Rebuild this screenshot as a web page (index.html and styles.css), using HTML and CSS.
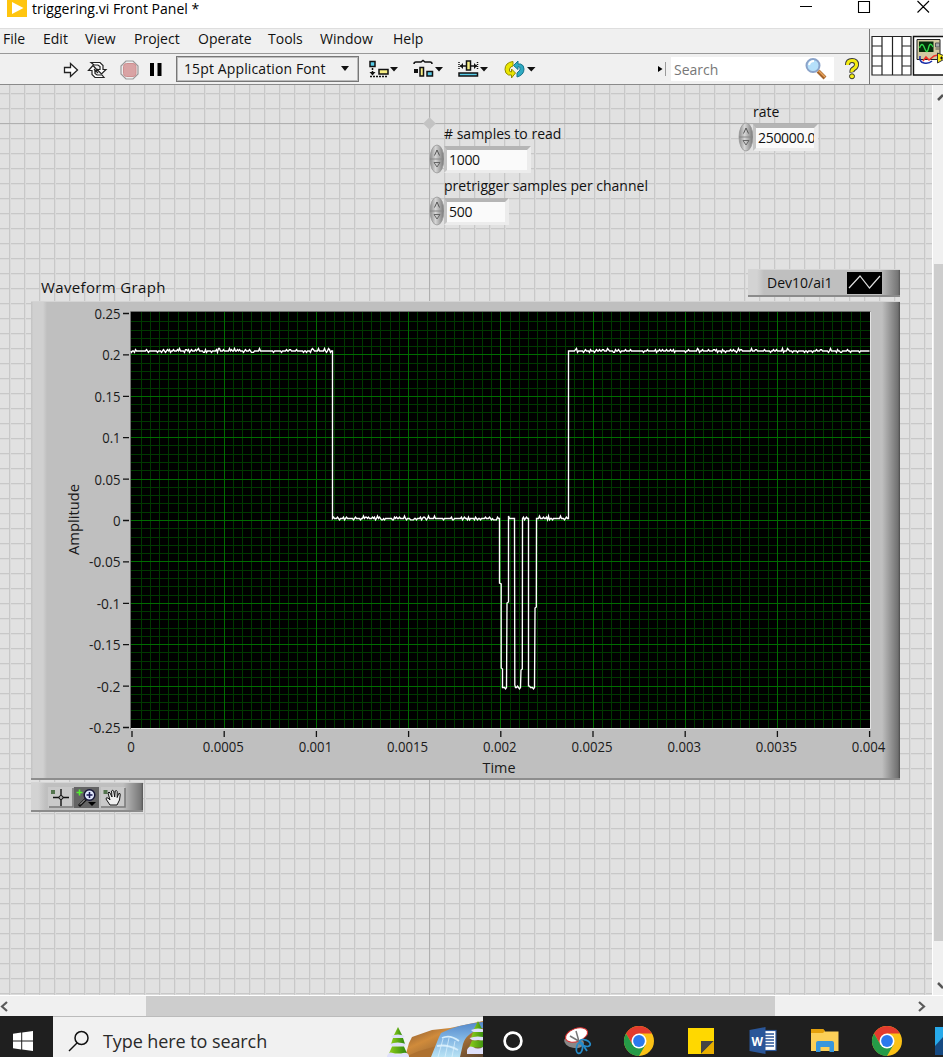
FILE: index.html
```html
<!DOCTYPE html>
<html lang="en">
<head>
<meta charset="utf-8">
<title>triggering.vi Front Panel *</title>
<link rel="stylesheet" href="styles.css">
</head>
<body>
<div class="window">
  <header class="titlebar">
    <svg class="app-icon" width="20" height="17" viewBox="0 0 20 17"><rect width="20" height="17" fill="#ffc50f"/><path d="M5 2v12L16.500 8z" fill="#fff"/></svg>
    <span class="title">triggering.vi Front Panel *</span>
    <svg class="controls" width="130" height="28" viewBox="0 0 130 28" fill="none" stroke="#000" stroke-width="1.1"><path d="M0 6.500h12M58.500 1.500h11v11h-11zM117.500 1l11.500 11.500M129 1l-11.500 11.500"/></svg>
  </header>

  <div class="bars">
    <div class="bars-main">
      <nav class="menubar"><span>File</span><span>Edit</span><span>View</span><span>Project</span><span>Operate</span><span>Tools</span><span>Window</span><span>Help</span></nav>
      <div class="toolbar">
        <svg class="run-tools" width="104" height="30" viewBox="62 54 104 30">
          <path d="M64.500 67.500h6v-4l7 6.500-7 6.500v-4h-6z" fill="#fff" stroke="#222" stroke-width="1.300"/>
          <g fill="#fff" stroke="#222" stroke-width="1.200"><path d="M91 62.500h9l3 3v4h3l-4.500 4.500-4.500-4.500h3v-3l-2-1.500h-4z"/><path d="M104 77.500h-9l-3-3v-4h-3.500l4.500-5 4.500 5H95v3l2 1.500h5z"/><path d="M94 69l4 4m0-4l-3 3" fill="none"/></g>
          <path d="M126 61h7l5 5v8l-5 5h-7l-5-5v-8z" fill="#eee" stroke="#999" stroke-width="1.200"/>
          <rect x="123.500" y="63.500" width="12.500" height="13" rx="3" fill="#d9a3a4" stroke="#cf8f90"/>
          <path d="M150 63h4v13h-4zM157.500 63h4v13h-4z" fill="#000"/>
        </svg>
        <div class="font-select"><span>15pt Application Font</span><i class="caret"></i></div>
        <svg class="layout-tools" width="172" height="30" viewBox="366 54 172 30">
          <g stroke="#111" stroke-width="1.500">
            <path d="M371 61.500h5v5h-5z" fill="#58cce8"/><path d="M380 69.500h9v4.500h-9z" fill="#f7ee83"/>
            <path d="M373.500 68v5M371 76.500h18" stroke-dasharray="2 1"/>
            <path d="M415 64q0-2 2-2h5l2-1.500 2 1.500h5q2 0 2 2" fill="none"/>
            <path d="M421 67.500h3.500v8.500H421z" fill="#f7ee83"/><path d="M428 71.500h5.500v4.500H428z" fill="#58cce8"/>
            <path d="M467.500 61h4v9h-4z" fill="#f7ee83"/><path d="M460 73h18.500v3H460z" fill="#58cce8"/>
            <path d="M460 62v8M478.500 62v8" stroke-dasharray="1 1"/><path d="M461 66h6M472 66h6"/>
          </g>
          <g fill="#111"><path d="M370.500 72h6l-3 3.500zM415 69h4v4h-4zM461 66l3-3v6zM478 66l-3-3v6z"/>
            <path d="M391 67h8l-4 4.500zM436 67h8l-4 4.500zM481 67h8l-4 4.500zM528 67h8.500l-4.200 4.500z"/></g>
          <path d="M514 61.500q-8 1-8 8 0 4 3.500 5.500h3v3l4-5-4-4v3q-3 0-2-3 .8-2.700 3.500-3z" fill="#eae600" stroke="#928c00"/>
          <path d="M518 77q7-2 7-8 0-4-3.500-5H519v-3l-4.500 4.500 4.500 4v-3q3 0 2 3.500l-3 3z" fill="#2faac2" stroke="#16758c"/>
        </svg>
        <div class="search-wrap">
          <svg width="10" height="16" viewBox="0 0 10 16"><path d="M1 5l4.500 3L1 11z"/><path d="M8.500 1v14" stroke="#999"/></svg>
          <div class="search-box"><span>Search</span>
            <svg width="24" height="24" viewBox="0 0 24 24"><path d="M14 14l7 7" stroke="#a5642b" stroke-width="4"/><path d="M14 13l7 7" stroke="#e9a55c" stroke-width="1.500"/><circle cx="9" cy="8.500" r="6.500" fill="#b5e0fa" stroke="#8aa3c9" stroke-width="2"/><path d="M5 8q1-4 5-4" fill="none" stroke="#fff" stroke-width="2"/></svg>
          </div>
          <svg class="help" width="16" height="22" viewBox="0 0 16 22"><g fill="none" stroke-linejoin="round"><path d="M3.500 7q0-4.500 4.500-4.500t4.500 4q0 2.500-2.500 4t-2 4" stroke="#333" stroke-width="5"/><path d="M3.500 7q0-4.500 4.500-4.500t4.500 4q0 2.500-2.500 4t-2 3.500" stroke="#f4ec13" stroke-width="3.200"/></g><circle cx="8" cy="18.300" r="2.500" fill="#f4ec13" stroke="#333"/></svg>
        </div>
      </div>
    </div>
    <svg class="vi-icons" width="73" height="55" viewBox="870 29 73 55">
      <path d="M872 36.500h39v38.500h-39zM882 36v39M892.500 36v39M902 36v39M872 56h39M872 46h10M872 66h10M902 46h9M902 66h9" fill="#fff" stroke="#222" stroke-width="1.200"/>
      <path d="M913.500 36.500H944v38.500h-30.500z" fill="#fff" stroke="#111" stroke-width="1.400"/>
      <path d="M917 39.500h23v20h-23z" fill="#d3caa2" stroke="#222"/>
      <path d="M919 41.500h14.500v10.500H919z" fill="#052c0a"/><path d="M919.500 48q2.500-7 5 0t4 0 4.500-1" fill="none" stroke="#32d94a" stroke-width="1.300"/>
      <path d="M935.500 43h4v4h-4zM935.500 49h4" fill="#aaa" stroke="#555"/>
      <path d="M917 60h24v5h-24z" fill="#fff"/>
      <path d="M920 56q-1 6 4 7 5 1 8-2" fill="none" stroke="#1b2faa" stroke-width="1.500"/><path d="M923 61l3-4 3 3 5-4 4-1" fill="none" stroke="#f03028" stroke-width="1.500"/>
      <path d="M937.500 53v10l7-4v-3z" fill="#f6ea10" stroke="#333"/><path d="M940 58h3m-1.500-1.500v3" stroke="#111"/>
    </svg>
  </div>

  <div class="workspace">
    <main class="canvas">
      <i class="origin-x"></i><i class="origin-y"></i><i class="origin-mark"></i>

      <section class="numeric samples">
        <label>#&nbsp;samples to read</label>
        <div class="field"><svg class="spin" width="16" height="30" viewBox="0 0 16 30"><use href="#spinner"/></svg><output>1000</output></div>
      </section>
      <section class="numeric pretrigger">
        <label>pretrigger samples per channel</label>
        <div class="field"><svg class="spin" width="16" height="30" viewBox="0 0 16 30"><use href="#spinner"/></svg><output>500</output></div>
      </section>
      <section class="numeric rate">
        <label>rate</label>
        <div class="field"><svg class="spin" width="16" height="30" viewBox="0 0 16 30"><use href="#spinner"/></svg><output>250000.0</output></div>
      </section>

      <div class="graph-label">Waveform Graph</div>
      <div class="legend"><span>Dev10/ai1</span>
        <svg width="35" height="22" viewBox="0 0 35 22"><rect width="35" height="22"/><path d="M2 16L13 4l9.500 12L33 4" fill="none" stroke="#ddd" stroke-width="1.200"/></svg>
      </div>

      <div class="graph">
        <svg id="plot" width="869" height="476" viewBox="31 302 869 476">
          <rect x="130" y="311" width="741" height="418" fill="#e4e4e4"/>
          <path d="M130.500 729V311.500h740" fill="none" stroke="#707070"/>
          <rect x="131" y="312" width="739" height="416"/>
          <path id="minor" stroke="#003800" shape-rendering="crispEdges"/>
          <path id="major" stroke="#006c00" shape-rendering="crispEdges"/>
          <path id="ticks" stroke="#111" stroke-width="1.300"/>
          <path id="wave" fill="none" stroke="#fff" stroke-width="1.350"/>
          <g id="labels" class="axis"></g>
          <text class="axis" x="499" y="773" text-anchor="middle" textLength="33" lengthAdjust="spacingAndGlyphs">Time</text>
          <text class="axis" transform="translate(79 519.500) rotate(-90)" text-anchor="middle" textLength="71" lengthAdjust="spacingAndGlyphs">Amplitude</text>
        </svg>
      </div>

      <div class="palette">
        <svg width="26" height="22" viewBox="48 787 26 22"><rect x="48" y="787" width="25" height="21" fill="#c9c9c9"/><path d="M49 807h24v-19" fill="none" stroke="#777" stroke-width="1.500"/><rect x="51" y="790" width="4" height="4" fill="#54744e"/><path d="M61 789v17M53 797.500h16" stroke="#111" stroke-width="1.400"/><circle cx="61" cy="797.500" r="2" fill="#aaa" stroke="#111"/></svg>
        <svg width="26" height="22" viewBox="74 787 26 22"><rect x="74" y="787" width="25" height="21" fill="#646464"/><path d="M79.500 789.500v6M76.500 792.500h6" stroke="#55ee31" stroke-width="1.600"/><path d="M79 806l7-7" stroke="#111" stroke-width="3"/><path d="M80 804.500l5-5" stroke="#ccc"/><circle cx="89.500" cy="795" r="5.300" fill="#dfe6fb" stroke="#151535" stroke-width="1.500"/><path d="M86.500 795h6m-3-3v6" stroke="#17174f" stroke-width="1.500"/><path d="M88 802h8l-4 4z"/></svg>
        <svg width="26" height="22" viewBox="100 787 26 22"><rect x="101" y="787" width="24" height="21" fill="#c9c9c9"/><path d="M101 807h24v-19" fill="none" stroke="#777" stroke-width="1.500"/><rect x="103.500" y="790" width="4" height="4" fill="#54744e"/><path transform="translate(1 0)" d="M109 805l-4-6q0-2 2-1l2 2-2-7q1-2 2 0l2 4-.5-6q1.500-1.500 2.200 0l1 6 .5-6q1.500-1.200 2 .5v6l1.500-4q2-.5 1.500 1.500l-.7 5-2.500 5z" fill="#eee" stroke="#111"/></svg>
      </div>
    </main>
    <div class="vscroll"><i class="vthumb"></i>
      <svg class="up" width="10" height="12" viewBox="0 0 10 12"><path d="M5 9l5-5" stroke="#555" stroke-width="2.500"/></svg>
      <svg class="down" width="10" height="12" viewBox="0 0 10 12"><path d="M5 2l5 5" stroke="#555" stroke-width="2.500"/></svg>
    </div>
  </div>

  <div class="hscroll">
    <svg width="10" height="20" viewBox="0 0 10 20"><path d="M7 6l-5 4.500L7 15" fill="none" stroke="#5a5a5a" stroke-width="2.200"/></svg>
    <i class="hthumb"></i>
    <svg class="right" width="10" height="20" viewBox="0 0 10 20"><path d="M2 6l5 4.500L2 15" fill="none" stroke="#5a5a5a" stroke-width="2.200"/></svg>
  </div>

  <footer class="taskbar">
    <div class="start"><svg width="20" height="20" viewBox="0 0 20 20" fill="#fff"><path d="M0 2.800L8.200 1.600V9.500H0zM9.200 1.500L20 0v9.500H9.200zM0 10.500h8.200v7.900L0 17.200zM9.200 10.500H20V20L9.200 18.500z"/></svg></div>
    <div class="task-search">
      <svg width="22" height="22" viewBox="0 0 22 22" fill="none" stroke="#111" stroke-width="1.500"><circle cx="13.500" cy="8" r="6.500"/><path d="M9 13l-8 8"/></svg>
      <span>Type here to search</span>
      <svg class="scene" width="98" height="40" viewBox="385 1017 98 40">
        <defs>
          <linearGradient id="rock" x1="0" x2="1" y2="1"><stop offset="0" stop-color="#6a452d"/><stop offset=".4" stop-color="#d08b3b"/><stop offset="1" stop-color="#5c432f"/></linearGradient>
          <linearGradient id="river" x1="0" x2="0" y2="1"><stop offset="0" stop-color="#5287ca"/><stop offset=".45" stop-color="#7fb3e2"/><stop offset="1" stop-color="#b9e3f4"/></linearGradient>
          <linearGradient id="pine" x1="0" x2="1"><stop offset="0" stop-color="#8fce1c"/><stop offset="1" stop-color="#2c860e"/></linearGradient>
          <g id="tree"><path d="M0 0l5 10H-5z" fill="url(#pine)"/><path d="M-7 9q7-3 14 0-2 3-7 2-5 1-7-2z" fill="#dfe0fa"/><path d="M-5 11H5l2 6H-7z" fill="url(#pine)"/><path d="M-8.500 17q8-3 17 0-3 4-8.500 2-5 2-8.500-2z" fill="#dfe0fa"/><path d="M-6 19.500H6l3 7H-9z" fill="url(#pine)"/><path d="M-11 29q2-5 6-3 5 3 10 0 5-1 6 3v4h-22z" fill="#dfe0fa"/></g>
        </defs>
        <path d="M405 1057l4-14 3-6 20-7 18-2 33-7v36z" fill="url(#rock)"/>
        <path d="M405 1057l14-6 18-5 4 11z" fill="#ae7130"/>
        <path d="M441 1033q18-9 42-11v6q-17 5-20 16l-3 13h-29l8-20z" fill="url(#river)"/>
        <path d="M442 1038q8-4 17 3M437 1046q10-2 21 4" fill="none" stroke="#d5edfb" stroke-width="1.800"/>
        <path d="M443 1039l-5 18M449 1038l-4 19M455 1041l-3 16" stroke="#dff4ff" opacity=".7"/>
        <use href="#tree" x="398" y="1027"/><use href="#tree" x="478" y="1021"/>
      </svg>
    </div>
    <div class="apps">
      <svg width="460" height="41" viewBox="483 1016 460 41">
        <circle cx="513" cy="1041" r="8.400" fill="none" stroke="#fff" stroke-width="2.700"/>
        <g><ellipse cx="574" cy="1042" rx="10" ry="6" fill="#888" transform="rotate(12 574 1042)"/><ellipse cx="576.500" cy="1035" rx="11.500" ry="6.500" fill="#fff" stroke="#d63131" transform="rotate(-20 576.500 1035)"/><path d="M576 1031l4 14M570 1036l12 7" stroke="#777" stroke-width="1.500"/><g fill="none" stroke="#258bc9" stroke-width="1.800"><ellipse cx="585" cy="1043" rx="5.500" ry="3" transform="rotate(20 585 1043)"/><ellipse cx="579.500" cy="1048" rx="3" ry="5.500" transform="rotate(10 579.500 1048)"/><path d="M581 1042l6 9"/></g></g>
        <defs><g id="chrome"><circle r="15" fill="#fbc116"/><path d="M-13-7.500A15 15 0 0 1 13-7.500H0L-6.500 3.700z" fill="#e33b2e"/><path d="M-13-7.500A15 15 0 0 0 0 15L6.500 3.700-6.500 3.700z" fill="#259b48"/><circle r="7.500" fill="#fff"/><circle r="5.900" fill="#2b79ed"/></g></defs>
        <use href="#chrome" x="639" y="1041"/><use href="#chrome" x="887" y="1041"/>
        <rect x="688" y="1028" width="26" height="26" fill="#ffd800"/><path d="M701 1054v-13h13z" fill="#444"/><path d="M701 1054l13-13v13z" fill="#e9af00"/>
        <rect x="759" y="1030.500" width="17" height="20" fill="#fff" stroke="#2a5699" stroke-width="1.200"/><path d="M765 1034h9M765 1037h9M765 1040h9M765 1043h9M765 1046h9" stroke="#2a5699" stroke-width="1.300"/><path d="M749.500 1030l16-3v27l-16-3z" fill="#2a5699"/><text class="word" x="751.500" y="1046" textLength="11.500" lengthAdjust="spacingAndGlyphs">W</text>
        <path d="M811 1029h12l2 2.500h13.500V1051H811z" fill="#fbcf58"/><path d="M811 1029h12l2 2-2 2h-12z" fill="#e4a00c"/><path d="M816 1052v-9q0-2 2-2h14q2 0 2 2v9h-4.500v-5h-9v5z" fill="#3796dd"/>
        <rect x="935" y="1027" width="8" height="28" fill="#164a82"/><path d="M935 1027h8v10l-8 9z" fill="#27a9ea"/>
      </svg>
    </div>
  </footer>
</div>

<svg width="0" height="0" class="defs"><defs>
  <linearGradient id="metal"><stop offset="0" stop-color="#8d8d8d"/><stop offset=".4" stop-color="#d6d6d6"/><stop offset="1" stop-color="#777"/></linearGradient>
  <g id="spinner"><ellipse cx="8" cy="15" rx="7" ry="14" fill="url(#metal)" stroke="#999" stroke-width=".8"/><path d="M1 15h14" stroke="#888"/><path d="M5.500 11.500L8 6l2.500 5.500" fill="none" stroke="#555"/><path d="M5 18.500h6L8 23z" fill="none" stroke="#666"/></g>
</defs></svg>
<script src="plot.js"></script>
</body>
</html>
```

FILE: styles.css
```css
* { box-sizing: border-box; }
body { margin: 0; font-family: "Open Sans", "Noto Sans", sans-serif; font-size: 14px; color: #111; overflow: hidden; }
svg { display: block; flex: none; }
.defs { position: absolute; }
.window { width: 943px; height: 1057px; display: flex; flex-direction: column; overflow: hidden; }
.titlebar { height: 28px; background: #fff; display: flex; align-items: flex-start; padding-left: 7px; flex: none; }
.title { margin-left: 5px; line-height: 17px; font-size: 14px; letter-spacing: 0.02px; color: #000; white-space: nowrap; }
.controls { margin-left: auto; margin-right: 13px; }
.bars { height: 57px; display: flex; background: #f0f0f0; border-top: 1px solid #dedede; border-bottom: 1px solid #8a8a8a; flex: none; }
.bars-main { width: 870px; border-right: 1px solid #777; }
.menubar { height: 25px; display: grid; grid-template-columns: 40px 42px 49px 64px 70px 52px 73px 60px; padding-left: 3px; line-height: 20px; border-bottom: 1px solid #999; }
.toolbar { height: 30px; display: flex; align-items: center; padding-left: 62px; }
.font-select { width: 183px; height: 26px; margin-left: 10px; border: 1px solid #777; box-shadow: inset 0 0 0 1px #bbb; display: flex; align-items: center; justify-content: space-between; padding: 0 9px 2px 7px; white-space: nowrap; letter-spacing: 0.12px; }
.caret { border: 4.5px solid transparent; border-top: 5px solid #111; border-bottom: 0; }
.layout-tools { margin-left: 6px; }
.search-wrap { display: flex; align-items: center; margin-left: 120px; }
.search-box { width: 163px; height: 24px; margin-left: 4px; background: #fff; color: #777; display: flex; align-items: center; justify-content: space-between; padding: 0 6px 0 3px; }
.help { margin-left: 10px; }
.workspace { height: 910px; display: flex; flex: none; }
.canvas { width: 933px; position: relative; background-color: #e1e1e1; background-image: linear-gradient(90deg, #c8c8c8 1px, #dadada 1px 2px, transparent 2px), linear-gradient(#c8c8c8 1px, #dadada 1px 2px, transparent 2px); background-size: 15px 15px; background-position: 9px 8px; border-right: 1px solid #fff; }
.canvas > * { position: absolute; }
.origin-x { left: 0; top: 38px; width: 932px; height: 1px; background: #b0b0b0; }
.origin-y { left: 429px; top: 0; width: 1px; height: 910px; background: #b0b0b0; }
.origin-mark { left: 425px; top: 34px; width: 9px; height: 9px; background: #c3c3c3; transform: rotate(45deg); }
.numeric { display: flex; flex-direction: column; align-items: flex-start; white-space: nowrap; }
.numeric label { padding-left: 15px; line-height: 20px; }
.field { display: flex; align-items: center; height: 30px; }
.field output { height: 27px; margin-left: -1px; padding: 0 0 0 2px; border: solid; border-width: 4px 4px 3px 3px; border-color: #b5b5b5 #ececec #ececec #c4c4c4; background: #fafafa; line-height: 20px; overflow: hidden; letter-spacing: -0.3px; }
.samples { left: 429px; top: 39px; }
.samples output { width: 87px; }
.pretrigger { left: 429px; top: 90px; }
.pretrigger label { line-height: 21px; }
.pretrigger output { width: 65px; }
.rate { left: 738px; top: 17px; }
.rate output { width: 65px; }
.graph-label { left: 41px; top: 192px; line-height: 20px; font-size: 15px; letter-spacing: 0.35px; white-space: nowrap; }
.legend { left: 748px; top: 184px; width: 152px; height: 28px; display: flex; align-items: center; padding: 0 18px 0 19px; justify-content: space-between; background: linear-gradient(90deg, #d3d3d3 0 9px, #bfbfbf 16px 132px, #757575 150px, #555); border-top: 1px solid #d5d5d5; border-bottom: 2px solid #8b8b8b; }
.graph { left: 31px; top: 216px; width: 869px; height: 479px; background: linear-gradient(90deg, #c5c5c5 0 1px, #d0d0d0 2px 12px, #bfbfbf 16px 851px, #707070 867px, #4b4b4b); border-top: 1px solid #d4d4d4; border-bottom: 2px solid #8d8d8d; overflow: hidden; }
.axis { font-size: 15px; fill: #1a1a1a; }
.palette { left: 31px; top: 697px; width: 112px; height: 30px; display: flex; padding: 4px 0 0 17px; background: linear-gradient(90deg, #d3d3d3 0 7px, #bfbfbf 15px 92px, #777 110px, #555); border-top: 1px solid #d5d5d5; border-bottom: 2px solid #8b8b8b; }
.vscroll { width: 10px; background: #f0f0f0; position: relative; padding-top: 179px; }
.vthumb { display: block; width: 9px; height: 677px; margin-left: 1px; background: #cdcdcd; }
.up, .down { position: absolute; left: 0; }
.up { top: 6px; }
.down { bottom: 2px; }
.hscroll { height: 21px; background: #f0f0f0; border-top: 1px solid #fff; display: flex; flex: none; }
.hthumb { width: 629px; height: 20px; margin-left: 136px; background: #cdcdcd; }
.right { margin-left: 142px; }
.taskbar { height: 41px; display: flex; flex: none; background: #1f1f1f; }
.start { width: 53px; display: flex; align-items: center; padding: 9px 0 0 13px; }
.task-search { width: 430px; background: #f1f1f1; border-top: 1px solid #bbb; display: flex; align-items: center; padding-left: 15px; font-size: 18px; white-space: nowrap; color: #2a2a2a; }
.task-search > svg:first-child { margin-top: 8px; }
.task-search span { margin: 7px 0 0 13px; letter-spacing: -0.08px; }
.scene { margin-left: auto; }
.word { font-family: "Open Sans", sans-serif; font-weight: 700; font-size: 13px; fill: #fff; }
```

FILE: plot.js
```javascript
const el = id => document.getElementById(id);
const left = 132, top0 = 313.5, stepX = 92.2, stepY = 41.4;

let minor = '', major = '', ticks = '', labels = '';
for (let i = 0; i <= 80; i++) {
  const x = Math.min(869.5, Math.floor(left + i * stepX / 10) + 0.5);
  const d = `M${x} 312V728`;
  if (i % 10) minor += d; else if (i > 0 && i < 80) major += d;
}
for (let i = 0; i <= 50; i++) {
  const y = Math.floor(top0 + i * stepY / 5) + 0.5;
  const d = `M131 ${y}H870`;
  if (i % 5) minor += d; else if (i > 0 && i < 50) major += d;
}

// Width of a tick label: digits, the decimal point and the minus sign differ.
const labelWidth = t => [...t].reduce((w, c) => w + (c === '.' ? 3.1 : c === '-' ? 5.5 : 7.6), 0);
const label = (t, x, y, anchor) =>
  `<text x="${x.toFixed(1)}" y="${y.toFixed(1)}" text-anchor="${anchor}" textLength="${labelWidth(t).toFixed(1)}" lengthAdjust="spacingAndGlyphs">${t}</text>`;

['0.25', '0.2', '0.15', '0.1', '0.05', '0', '-0.05', '-0.1', '-0.15', '-0.2', '-0.25'].forEach((t, i) => {
  const y = top0 + i * stepY;
  ticks += `M123 ${y.toFixed(1)}h6`;
  labels += label(t, 120.5, y + 5.4, 'end');
});
['0', '0.0005', '0.001', '0.0015', '0.002', '0.0025', '0.003', '0.0035', '0.004'].forEach((t, i) => {
  const x = left + i * stepX;
  ticks += `M${x.toFixed(1)} 731v6`;
  labels += label(t, x - 1, 751.7, 'middle');
});

let seed = 11;
const rand = () => (seed = (seed * 16807) % 2147483647) / 2147483647;
function level(x0, x1, y) {
  let d = '';
  for (let x = x0; x < x1; x += 1) {
    const r = rand();
    const n = r > 0.96 ? -2.5 : r > 0.82 ? -1.3 : r < 0.14 ? 1.3 : 0;
    d += `L${x} ${y + n}`;
  }
  return d + `L${x1} ${y}`;
}
el('minor').setAttribute('d', minor);
el('major').setAttribute('d', major);
el('ticks').setAttribute('d', ticks);
el('labels').innerHTML = labels;
el('wave').setAttribute('d', 'M131 351' + level(131.5, 332.5, 351) +
  level(332.5, 499.5, 518.5) + 'L499.5 583L501.2 584V668L502.5 669' +
  level(502.5, 506.5, 687.5) + 'L507 603L508.5 602' + level(508.5, 514.5, 518.5) +
  'L514.8 685' + level(515.5, 520.5, 687.5) + 'L521 670L522.3 669' +
  level(522.5, 528.5, 518.5) + 'L528.5 686' + level(529.5, 534.5, 687.5) +
  'L535 608L536.3 607' + level(536.5, 568.5, 518.5) + level(568.5, 869.5, 351));
```
